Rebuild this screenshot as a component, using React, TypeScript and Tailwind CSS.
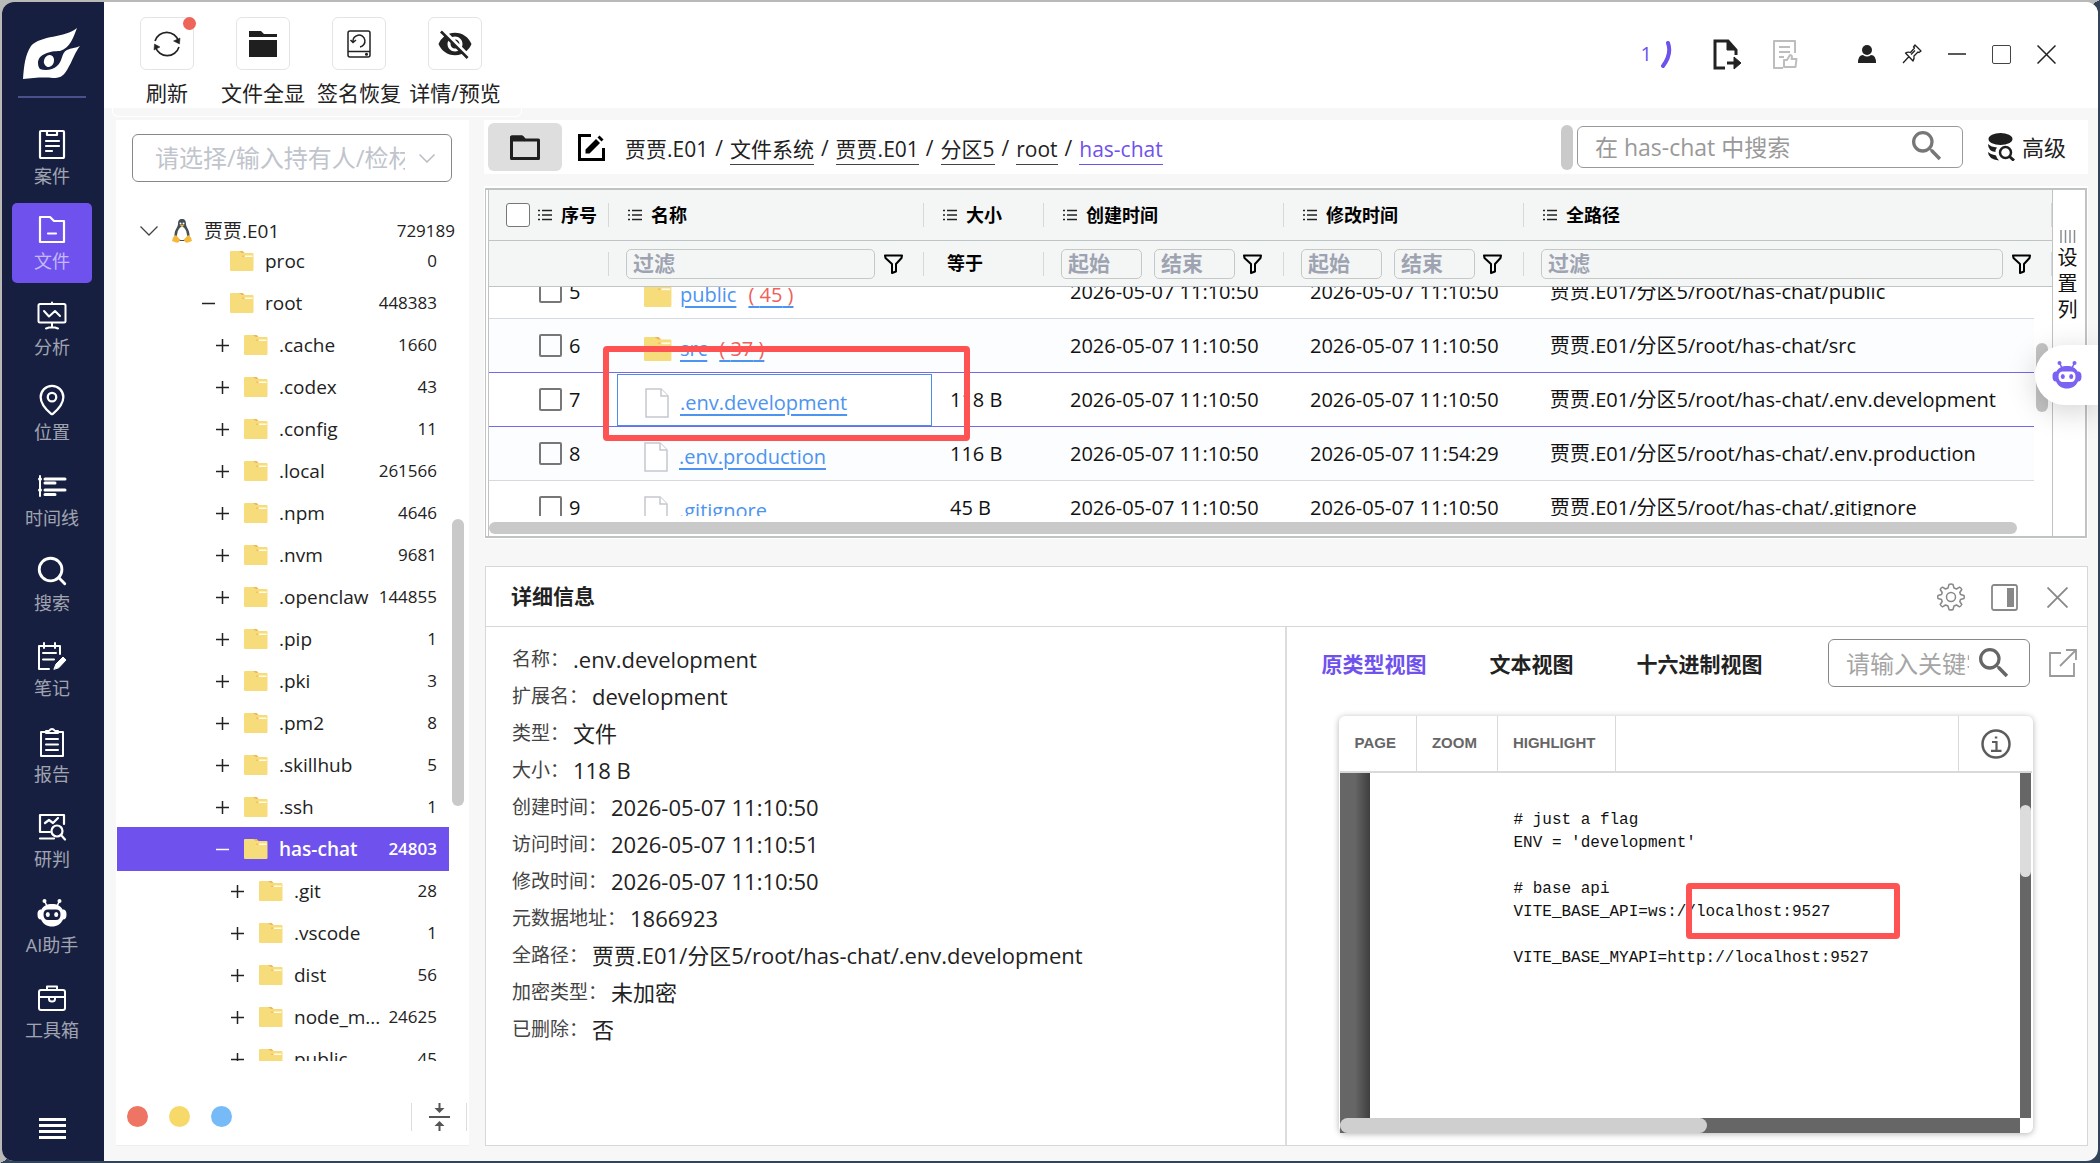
import React from "react";
import { MdVisibilityOff, MdSearch } from "react-icons/md";
import { Search, MapPin } from "lucide-react";

type TreeNode = {
  name: string;
  count: number;
  level: 0 | 1 | 2;
  state?: "open" | "closed";
  active?: boolean;
};

type FileRow = {
  no: number;
  name: string;
  kind: "folder" | "file";
  children?: number;
  size: string;
  created: string;
  modified: string;
  path: string;
};

const treeNodes: TreeNode[] = [
  { name: "proc", count: 0, level: 0 },
  { name: "root", count: 448383, level: 0, state: "open" },
  { name: ".cache", count: 1660, level: 1, state: "closed" },
  { name: ".codex", count: 43, level: 1, state: "closed" },
  { name: ".config", count: 11, level: 1, state: "closed" },
  { name: ".local", count: 261566, level: 1, state: "closed" },
  { name: ".npm", count: 4646, level: 1, state: "closed" },
  { name: ".nvm", count: 9681, level: 1, state: "closed" },
  { name: ".openclaw", count: 144855, level: 1, state: "closed" },
  { name: ".pip", count: 1, level: 1, state: "closed" },
  { name: ".pki", count: 3, level: 1, state: "closed" },
  { name: ".pm2", count: 8, level: 1, state: "closed" },
  { name: ".skillhub", count: 5, level: 1, state: "closed" },
  { name: ".ssh", count: 1, level: 1, state: "closed" },
  { name: "has-chat", count: 24803, level: 1, state: "open", active: true },
  { name: ".git", count: 28, level: 2, state: "closed" },
  { name: ".vscode", count: 1, level: 2, state: "closed" },
  { name: "dist", count: 56, level: 2, state: "closed" },
  { name: "node_m...", count: 24625, level: 2, state: "closed" },
  { name: "public", count: 45, level: 2, state: "closed" },
];

const levelPadding = ["pl-[85px]", "pl-[99px]", "pl-[114px]"];

const base = "贾贾.E01/分区5/root/has-chat/";
const time = "2026-05-07 11:10:50";

const rows: FileRow[] = [
  { no: 5, name: "public", kind: "folder", children: 45, size: "", created: time, modified: time, path: base + "public" },
  { no: 6, name: "src", kind: "folder", children: 37, size: "", created: time, modified: time, path: base + "src" },
  { no: 7, name: ".env.development", kind: "file", size: "118 B", created: time, modified: time, path: base + ".env.development" },
  { no: 8, name: ".env.production", kind: "file", size: "116 B", created: time, modified: "2026-05-07 11:54:29", path: base + ".env.production" },
  { no: 9, name: ".gitignore", kind: "file", size: "45 B", created: time, modified: time, path: base + ".gitignore" },
];

const details = [
  ["名称", ".env.development"],
  ["扩展名", "development"],
  ["类型", "文件"],
  ["大小", "118 B"],
  ["创建时间", "2026-05-07 11:10:50"],
  ["访问时间", "2026-05-07 11:10:51"],
  ["修改时间", "2026-05-07 11:10:50"],
  ["元数据地址", "1866923"],
  ["全路径", base + ".env.development"],
  ["加密类型", "未加密"],
  ["已删除", "否"],
];

const fileText = `# just a flag
ENV = 'development'

# base api
VITE_BASE_API=ws://localhost:9527

VITE_BASE_MYAPI=http://localhost:9527`;

/* ---------- icons ---------- */

const Line = ({ children, w = 2 }: { children: React.ReactNode; w?: number }) => (
  <svg width="30" height="30" viewBox="0 0 30 30" fill="none" stroke="currentColor" strokeWidth={w} strokeLinecap="round" strokeLinejoin="round">
    {children}
  </svg>
);

const Logo = () => (
  <svg width="58" height="52" viewBox="0 0 58 52" fill="#fff">
    <path d="M54 0C50 10 47 20 37 23C27 23 15 26 15 35C15 38 16 40 17 41C22 43 30 42 34 38C40 33 38 25 44 22C48 20 53 20 57 18C52 24 50 32 44 42C40 49 36 50 30 50C20 49 10 50 0 51C1 38 2 27 8 18C18 7 42 10 54 0Z" />
    <ellipse cx="26" cy="33" rx="5" ry="6" transform="rotate(20 26 33)" />
  </svg>
);

const Robot = ({ size = 30 }: { size?: number }) => (
  <svg width={size} height={size} viewBox="0 0 30 30">
    <circle cx="7.5" cy="3" r="2" fill="currentColor" />
    <circle cx="22.5" cy="3" r="2" fill="currentColor" />
    <path d="M7.5 3L10.5 9M22.5 3L19.5 9" stroke="currentColor" strokeWidth="1.6" />
    <path
      fill="currentColor"
      fillRule="evenodd"
      d="M15 6C20 6 24 8 25.500 11.500C28.500 11.500 29.500 13 29.500 16.500C29.500 20 28.500 21.500 26 21.500C24 26 20 28.500 15 28.500C10 28.500 6 26 4 21.500C1.500 21.500 .5 20 .5 16.500C.5 13 1.500 11.500 4.500 11.500C6 8 10 6 15 6ZM11 11.500C8 11.500 6.500 13 6.500 16.500C6.500 20 8 22 11 22H19C22 22 23.500 20 23.500 16.500C23.500 13 22 11.500 19 11.500Z"
    />
    <ellipse cx="10.800" cy="16.500" rx="2" ry="2.500" fill="currentColor" />
    <ellipse cx="19.200" cy="16.500" rx="2" ry="2.500" fill="currentColor" />
  </svg>
);

const FolderSolid = () => (
  <svg width="28" height="26" viewBox="0 0 28 26" fill="#1f1f1f">
    <path d="M0 0H12L15 3H28V6H0ZM0 9H28V26H0Z" />
  </svg>
);

const FolderIcon = ({ className = "w-6 h-5" }: { className?: string }) => (
  <svg className={className + " shrink-0"} viewBox="0 0 24 20" preserveAspectRatio="none">
    <path d="M1 0H12.500L14.500 2H22.500Q23.500 2 23.500 3V19Q23.500 20 22.500 20H1Q0 20 0 19V1Q0 0 1 0Z" fill="#f7dc7c" />
    <path d="M9 0H12.500L14.500 2H12Z" fill="#efb45c" />
    <rect x="15" y="4.500" width="7.500" height="1.500" fill="#fffbe8" />
    <rect x="12" y="4.500" width="2" height="1.500" fill="#f3c064" />
  </svg>
);

const FileIcon = () => (
  <svg className="w-6 h-[30px] shrink-0" viewBox="0 0 24 30" fill="#fff" stroke="#c3c7cd" strokeWidth="1.500">
    <path d="M1 1H16L23 8V29H1Z" />
    <path d="M16 1V8H23" />
  </svg>
);

const ListIcon = () => (
  <svg className="shrink-0" width="14" height="12" viewBox="0 0 14 12" stroke="#222" strokeWidth="1.600">
    <path d="M0 1.500H2M4 1.500H14M0 6H2M4 6H14M0 10.500H2M4 10.500H14" />
  </svg>
);

const Funnel = () => (
  <button aria-label="筛选" className="shrink-0 text-black">
    <svg width="19" height="20" viewBox="0 0 19 20" fill="none" stroke="currentColor" strokeWidth="2" strokeLinejoin="round">
      <path d="M1 1.500H18L17.500 4L12 10V17.500L8 19V10L1.500 4Z" />
    </svg>
  </button>
);

const Penguin = () => (
  <svg width="20" height="24" viewBox="0 0 20 24">
    <path d="M10 0C13 0 14 2 14 5C14 8 17.500 11 17.500 16C17.500 20 15 22 10 22C5 22 2.500 20 2.500 16C2.500 11 6 8 6 5C6 2 7 0 10 0Z" fill="#454d55" />
    <path d="M10 7.500C13 8 15 13 15 17C15 20 13 21 10 21C7 21 5 20 5 17C5 13 7 8 10 7.500Z" fill="#fff" />
    <circle cx="8.500" cy="4.500" r="1" fill="#fff" />
    <circle cx="11.500" cy="4.500" r="1" fill="#fff" />
    <path d="M8 6.500L10 5.500L12 6.500L10 8.200Z" fill="#f5b83d" />
    <path d="M4 16L8 20.500C8 23 6 24 4 23.500L0 22L1 18.500ZM16 16L12 20.500C12 23 14 24 16 23.500L20 22L19 18.500Z" fill="#f5b83d" />
  </svg>
);

const navItems: { label: string; icon: React.ReactNode; active?: boolean }[] = [
  {
    label: "案件",
    icon: (
      <Line w={2.2}>
        <path d="M9 2H4Q3 2 3 3V28Q3 29 4 29H26Q27 29 27 28V3Q27 2 26 2H21M10 2H20V6H10ZM9 12H22M9 17H22M9 22H15" />
      </Line>
    ),
  },
  {
    label: "文件",
    active: true,
    icon: (
      <Line w={2.2}>
        <path d="M3 3H13L17 7H27V28H3ZM11 19.500H19" />
      </Line>
    ),
  },
  {
    label: "分析",
    icon: (
      <Line>
        <path d="M3 4H27Q28.500 4 28.500 5.500V21Q28.500 22.500 27 22.500H3Q1.500 22.500 1.500 21V5.500Q1.500 4 3 4ZM15 2.500V4M7 11L12 16.500L18 11L23 16M15 23V27M9 28.500L12 27.500H18L21 28.500" />
      </Line>
    ),
  },
  { label: "位置", icon: <MapPin size={34} strokeWidth={1.6} /> },
  {
    label: "时间线",
    icon: (
      <Line w={3}>
        <path d="M3 5V25" strokeWidth="2" />
        <path d="M2.500 8H3.500M2.500 19H3.500M8 8H28M8 12H18M8 19H28M8 23.500H18" />
      </Line>
    ),
  },
  { label: "搜索", icon: <Search size={34} strokeWidth={2} /> },
  {
    label: "笔记",
    icon: (
      <Line>
        <path d="M12 28H2V5H23V13M7 2V7M18 2V7M13 5H14M6 12H19M6 18.500H17" />
        <path d="M17 28L19 23L26 16L29 19L22 26.500Z" fill="currentColor" strokeWidth="1" />
      </Line>
    ),
  },
  {
    label: "报告",
    icon: (
      <Line>
        <path d="M8 5H4V29H26V5H22M9 6H21V4H18Q15 0 12 4H9ZM9 12H21M9 17.500H21M9 23H21" />
      </Line>
    ),
  },
  {
    label: "研判",
    icon: (
      <Line w={2.2}>
        <path d="M13 20H3V3H27V12M8 11L12 8L16 11L21 6M3 26.500H17" />
        <circle cx="20" cy="19" r="5.500" />
        <path d="M24 23L28 27.500" />
      </Line>
    ),
  },
  { label: "AI助手", icon: <Robot /> },
  {
    label: "工具箱",
    icon: (
      <Line>
        <path d="M4 7H26Q28 7 28 9V25Q28 27 26 27H4Q2 27 2 25V9Q2 7 4 7ZM10 7V3.500H20V7M2 14H28M12 14V16Q12 18.500 15 18.500Q18 18.500 18 16V14" />
      </Line>
    ),
  },
];

/* ---------- sidebar ---------- */

const Sidebar = () => (
  <aside className="w-[102px] pr-[2px] shrink-0 flex flex-col items-center bg-[#171f40] text-white">
    <div className="mt-[26px] mb-4">
      <Logo />
    </div>
    <hr className="w-[68px] border-0 h-[2px] bg-[#4b4f8c]" />
    <nav className="flex-1 mt-5 flex flex-col justify-between">
      {navItems.map((item) => (
        <button
          key={item.label}
          className={`w-20 h-20 rounded-[5px] flex flex-col items-center justify-center gap-1 ${item.active ? "bg-[#6f51ee]" : ""}`}
        >
          <span className="h-8 flex items-center">{item.icon}</span>
          <span className="text-[18px] leading-6 text-white/60">{item.label}</span>
        </button>
      ))}
    </nav>
    <button aria-label="菜单" className="mt-[66px] mb-[22px]">
      <svg width="27" height="21" viewBox="0 0 27 21" stroke="#fff" strokeWidth="3">
        <path d="M0 1.500H27M0 7.500H27M0 13.500H27M0 19.500H27" />
      </svg>
    </button>
  </aside>
);

/* ---------- top bar ---------- */

const tools = [
  {
    label: "刷新",
    badge: true,
    icon: (
      <svg width="28" height="28" viewBox="0 0 28 28" fill="none" stroke="#222" strokeWidth="1.600">
        <path d="M2 11A12.300 12.300 0 0 1 25.500 11M26 17A12.300 12.300 0 0 1 2.500 17" />
        <path d="M27 8L26.500 14L20.500 11ZM1 20L1.500 14L7 17Z" fill="#222" strokeWidth=".5" />
      </svg>
    ),
  },
  { label: "文件全显", icon: <FolderSolid /> },
  {
    label: "签名恢复",
    icon: (
      <svg width="24" height="28" viewBox="0 0 24 28" fill="none" stroke="#222" strokeWidth="1.500">
        <rect x="1" y="1" width="22" height="26" rx="2" />
        <path d="M1 21.500H23M6 12A6 6 0 1 1 13 17M3.500 10L6 12.500L9 10" />
        <circle cx="19.500" cy="24.300" r=".8" fill="#222" />
      </svg>
    ),
  },
  { label: "详情/预览", icon: <MdVisibilityOff size={36} /> },
];

const TopBar = () => (
  <header className="h-[106px] shrink-0 bg-white flex justify-between pl-[15px]">
    <div className="flex pt-[15px]">
      {tools.map((tool) => (
        <button key={tool.label} className="w-24 flex flex-col items-center text-[#222]">
          <span className="relative size-[54px] border border-[#e4e4e4] rounded-md flex items-center justify-center">
            {tool.icon}
            {tool.badge && <i className="absolute -top-px -right-[3px] size-[13px] rounded-full bg-[#ee6459]" />}
          </span>
          <span className="mt-2 text-[21px] leading-[30px] whitespace-nowrap">{tool.label}</span>
        </button>
      ))}
    </div>
    <div className="flex items-center h-[104px] pr-[42px] text-[#222]">
      <span className="text-[20px] text-[#6f51ee] mr-2">1</span>
      <svg className="mr-10" width="13" height="28" viewBox="0 0 13 28" fill="none" stroke="#6f51ee" strokeWidth="4" strokeLinecap="round">
        <path d="M8 3Q12 14 3 26" />
      </svg>
      <button aria-label="导出" className="mr-[31px]">
        <svg width="29" height="31" viewBox="0 0 29 31" fill="none" stroke="currentColor" strokeWidth="3">
          <path d="M12 29H2V2H15L23 11V16" />
          <path d="M14 2V11H23Z" fill="currentColor" strokeWidth="1" />
          <path d="M14 24H22" />
          <path d="M21 18L28 24L21 30Z" fill="currentColor" strokeWidth="1" />
        </svg>
      </button>
      <button aria-label="审核" className="mr-[60px] text-[#bdbdbd]">
        <svg width="25" height="29" viewBox="0 0 25 29" fill="none" stroke="currentColor" strokeWidth="2" strokeLinejoin="round">
          <path d="M10 28H1V1H22V13M6 7H17M6 12H17M6 17H11" />
          <path d="M11 20H14L17 15Q20 15 18.500 19H23.500L22.500 27H11Z" />
        </svg>
      </button>
      <button aria-label="用户" className="mr-[26px]">
        <svg width="18" height="18" viewBox="0 0 18 18" fill="currentColor">
          <circle cx="9" cy="5" r="5" />
          <path d="M0 18Q0 10 5 10Q9 13 13 10Q18 10 18 18Z" />
        </svg>
      </button>
      <button aria-label="置顶" className="mr-[26px]">
        <svg width="20" height="20" viewBox="0 0 20 20" fill="none" stroke="currentColor" strokeWidth="1.300" strokeLinejoin="round">
          <path d="M13 1L19 7L17 8.500L16 8L12 12Q12.500 15 11 17L3.500 9Q6 7.500 8.500 8.500L12.500 4L11.500 3ZM7 12.500L1 19M9 10.500L13 6.500" />
        </svg>
      </button>
      <button aria-label="最小化" className="mr-[26px]">
        <svg width="18" height="20" viewBox="0 0 18 20" stroke="currentColor" strokeWidth="1.500">
          <path d="M0 10H18" />
        </svg>
      </button>
      <button aria-label="最大化" className="mr-[26px] size-[19px] border border-[#444] rounded-[2px]" />
      <button aria-label="关闭">
        <svg width="19" height="19" viewBox="0 0 19 19" stroke="currentColor" strokeWidth="1.500">
          <path d="M.5 .5L18.500 18.500M18.500 .5L.5 18.500" />
        </svg>
      </button>
    </div>
  </header>
);

/* ---------- file tree ---------- */

const TreeItem = ({ node }: { node: TreeNode }) => (
  <li
    className={`flex items-center pr-3 mr-5 ${levelPadding[node.level]} ${
      node.active ? "h-11 -my-px bg-[#6f51ee] text-white font-semibold" : "h-[42px] text-[#222]"
    }`}
  >
    <button aria-label={node.state === "open" ? "收起" : "展开"} className="w-[13px] mr-[15px] shrink-0">
      {node.state && (
        <svg width="13" height="13" viewBox="0 0 13 13" stroke="currentColor" strokeWidth="1.500">
          <path d={node.state === "open" ? "M0 6.500H13" : "M0 6.500H13M6.500 0V13"} />
        </svg>
      )}
    </button>
    <FolderIcon />
    <span className="ml-[11px] text-[19px] leading-7 flex-1 whitespace-nowrap">{node.name}</span>
    <span className="text-[17px]">{node.count}</span>
  </li>
);

const TreePanel = () => (
  <section className="w-[353px] shrink-0 bg-white flex flex-col">
    <div className="relative mx-4 mt-[14px]">
      <select
        aria-label="持有人/检材"
        className="w-80 h-12 appearance-none rounded-md border border-[#888] bg-transparent pl-[22px] pr-[46px] text-[24px] text-[#c0c4cc]"
      >
        <option>请选择/输入持有人/检材</option>
      </select>
      <svg className="absolute right-[18px] top-5 pointer-events-none" width="16" height="9" viewBox="0 0 16 9" fill="none" stroke="#b8bcc4" strokeWidth="1.500">
        <path d="M.5 .5L8 8L15.500 .5" />
      </svg>
    </div>
    <div className="relative flex-1 min-h-0 mt-7 overflow-hidden pl-px">
      <div className="flex items-center h-[30px] pt-3 pl-[23px] pr-[14px] text-[#222]">
        <svg width="18" height="10" viewBox="0 0 18 10" fill="none" stroke="#444" strokeWidth="1.300">
          <path d="M.5 .5L9 9L17.500 .5" />
        </svg>
        <span className="ml-[14px]">
          <Penguin />
        </span>
        <span className="ml-3 text-[19px] flex-1">贾贾.E01</span>
        <span className="text-[17px]">729189</span>
      </div>
      <ul>
        {treeNodes.map((node) => (
          <TreeItem key={node.name} node={node} />
        ))}
      </ul>
      <span className="absolute right-[5px] top-[309px] w-3 h-[287px] rounded-full bg-[#c9c9c9]" />
    </div>
    <div className="mt-[42px] h-[43px] shrink-0 border-b border-[#eee] flex items-start">
      <div className="flex flex-1 gap-[21px] pl-[11px] pt-[3px]">
        <button aria-label="红色标记" className="size-[21px] rounded-full bg-[#ee7564]" />
        <button aria-label="黄色标记" className="size-[21px] rounded-full bg-[#f7d96a]" />
        <button aria-label="蓝色标记" className="size-[21px] rounded-full bg-[#76bbf7]" />
      </div>
      <button aria-label="全部折叠" className="h-7 w-14 mr-[2px] border-x border-[#ddd] flex items-center justify-center text-[#555]">
        <svg width="21" height="28" viewBox="0 0 21 28" fill="currentColor">
          <path d="M0 13H21V15H0ZM9.500 0H11.500V5H15.500L10.500 10L5.500 5H9.500ZM9.500 28H11.500V23H15.500L10.500 18L5.500 23H9.500Z" />
        </svg>
      </button>
    </div>
  </section>
);

/* ---------- breadcrumb bar ---------- */

const crumbs = ["贾贾.E01", "文件系统", "贾贾.E01", "分区5", "root", "has-chat"];

const PathBar = () => (
  <div className="h-[54px] shrink-0 bg-white flex items-center px-1">
    <button aria-label="文件夹" className="w-[74px] h-12 rounded-md bg-[#dedede] flex items-center justify-center">
      <svg width="30" height="25" viewBox="0 0 30 25" fill="none" stroke="#1f1f1f" strokeWidth="3" strokeLinejoin="round">
        <path d="M1.500 2H12L15 5H28.500V23.500H1.500Z" />
        <path d="M2 2H12L14 5H2Z" fill="#1f1f1f" />
      </svg>
    </button>
    <button aria-label="编辑路径" className="ml-4 mr-5">
      <svg width="27" height="27" viewBox="0 0 27 27" fill="none" stroke="#000" strokeWidth="3">
        <path d="M13 1.500H1.500V25.500H25.500V14" />
        <path d="M7.500 19.500V15.500L18 5L22 9L11.500 19.500ZM19.500 3.500L21.500 1.500L25.500 5.500L23.500 7.500Z" fill="#000" stroke="none" />
      </svg>
    </button>
    <nav className="flex items-center pt-1 text-[21px] text-[#222]">
      {crumbs.map((crumb, i) => (
        <React.Fragment key={i}>
          {i > 0 && <span className="mx-[7px]">/</span>}
          <a
            href="#"
            className={`leading-[30px] border-b ${
              i === 0 ? "border-transparent" : i === crumbs.length - 1 ? "border-[#6f51ee] text-[#6f51ee]" : "border-[#444]"
            }`}
          >
            {crumb}
          </a>
        </React.Fragment>
      ))}
    </nav>
    <span className="ml-auto w-3 h-[45px] rounded-full bg-[#cacaca]" />
    <div className="relative ml-1">
      <input
        aria-label="搜索"
        placeholder="在 has-chat 中搜索"
        className="w-[386px] h-[42px] rounded-md border border-[#999] pl-[17px] pr-16 text-[23px] placeholder:text-[#999]"
      />
      <MdSearch className="absolute right-4 top-0 text-[#777]" size={40} />
    </div>
    <button className="ml-[25px] mr-[18px] flex items-center gap-[7px] text-[22px] text-[#222]">
      <svg width="27" height="28" viewBox="0 0 27 28" fill="#1f1f1f">
        <ellipse cx="12.500" cy="6" rx="12" ry="6" />
        <path d="M0 11Q3 14 9 14.500Q7 17 7.500 19Q0 18 0 11ZM0 19Q3 22 8 22.500Q8.500 25 11 27.500Q0 26 0 19Z" />
        <circle cx="17.500" cy="19.500" r="5.500" fill="none" stroke="#1f1f1f" strokeWidth="2.500" />
        <path d="M21.500 23.500L26 27.500" stroke="#1f1f1f" strokeWidth="3" />
      </svg>
      高级
    </button>
  </div>
);

/* ---------- file table ---------- */

const HeadCell = ({ label, check }: { label: string; check?: boolean }) => (
  <th scope="col" className="p-0 font-bold border-b border-[#bfc4c7]">
    <div className={`h-6 flex items-center border-r border-[#d5d9dc] ${check ? "pl-[17px]" : "pl-[19px]"}`}>
      {check && <input type="checkbox" aria-label="全选" className="appearance-none size-6 mr-2 bg-white border border-[#777] rounded-[3px]" />}
      <ListIcon />
      <span className="ml-[9px] text-[18px] text-black">{label}</span>
    </div>
  </th>
);

const filterInput =
  "h-[30px] rounded-[5px] border border-[#c5c8c9] bg-transparent px-[6px] text-[21px] font-bold placeholder:font-bold placeholder:text-[#9ea3b2] min-w-0";

const FilterCell = ({ children }: { children?: React.ReactNode }) => (
  <td className="p-0 border-b border-[#bfc4c7]">
    <div className="h-6 flex items-center border-r border-[#d5d9dc] pl-[17px] pr-5">{children}</div>
  </td>
);

const DateFilter = ({ label }: { label: string }) => (
  <FilterCell>
    <input aria-label={label + "起始"} placeholder="起始" className={filterInput + " w-[81px]"} />
    <input aria-label={label + "结束"} placeholder="结束" className={filterInput + " w-[81px] ml-3 mr-2"} />
    <Funnel />
  </FilterCell>
);

const Columns = ({ first }: { first: string }) => (
  <colgroup>
    <col className={first} />
    <col className="w-[315px]" />
    <col className="w-[120px]" />
    <col className="w-[240px]" />
    <col className="w-[240px]" />
    <col />
  </colgroup>
);

const FileTable = () => (
  <section className="relative h-[353px] shrink-0 bg-white p-px pt-[2px]">
    <div className="h-full border-2 border-[#c0c3c4] border-l border-b-2 pl-[2px] flex">
      <div className="relative flex-1 min-w-0 flex flex-col border-l border-[#c0c3c4]">
        <table className="w-full table-fixed border-separate border-spacing-0 bg-[#f4f6f5] text-left">
          <Columns first="w-[120px]" />
          <thead>
            <tr className="h-[51px]">
              <HeadCell label="序号" check />
              <HeadCell label="名称" />
              <HeadCell label="大小" />
              <HeadCell label="创建时间" />
              <HeadCell label="修改时间" />
              <HeadCell label="全路径" />
            </tr>
          </thead>
          <tbody>
            <tr className="h-[46px]">
              <FilterCell />
              <FilterCell>
                <input aria-label="名称过滤" placeholder="过滤" className={filterInput + " flex-1 mr-[9px]"} />
                <Funnel />
              </FilterCell>
              <FilterCell>
                <span className="pl-[6px] text-[18px] font-bold">等于</span>
              </FilterCell>
              <DateFilter label="创建时间" />
              <DateFilter label="修改时间" />
              <FilterCell>
                <input aria-label="全路径过滤" placeholder="过滤" className={filterInput + " flex-1 mr-[9px]"} />
                <Funnel />
              </FilterCell>
            </tr>
          </tbody>
        </table>

        <div className="h-[229px] overflow-hidden pr-[18px]">
          <table className="-mt-[22px] w-full table-fixed border-separate border-spacing-0 text-[20px] text-[#111]">
            <Columns first="w-[128px]" />
            <tbody>
              {rows.map((row) => {
                const selected = row.no === 7;
                const line = selected || row.no === 6 ? "border-[#7468ee]" : "border-[#d6d9dd]";
                const cell = "p-0 border-b " + line;
                return (
                  <tr key={row.no} className={`h-[54px] ${row.no % 2 ? "bg-white" : "bg-[#fcfdff]"}`}>
                    <td className={cell}>
                      <label className="flex items-center pl-[50px] gap-[7px]">
                        <input type="checkbox" className="appearance-none size-[23px] border-2 border-[#777] rounded-[2px]" />
                        {row.no}
                      </label>
                    </td>
                    <td className={cell}>
                      <div className={`h-[52px] flex items-center pl-[27px] pt-[6px] ${selected ? "border border-[#4d8de8]" : ""}`}>
                        {row.kind === "folder" ? <FolderIcon className="w-7 h-6" /> : <FileIcon />}
                        <a href="#" className={`text-[#4d94f0] underline underline-offset-4 decoration-2 ${row.kind === "folder" ? "ml-2" : "ml-[11px]"}`}>
                          {row.name}
                        </a>
                        {row.children && (
                          <a href="#" className="ml-3 text-[#f0605a] underline underline-offset-4 decoration-2 decoration-[#4d94f0]">
                            ( {row.children} )
                          </a>
                        )}
                      </div>
                    </td>
                    <td className={cell + " pl-[18px]"}>{row.size}</td>
                    <td className={cell + " pl-[18px]"}>{row.created}</td>
                    <td className={cell + " pl-[18px]"}>{row.modified}</td>
                    <td className={cell + " pl-[18px] whitespace-nowrap"}>{row.path}</td>
                  </tr>
                );
              })}
            </tbody>
          </table>
        </div>
        <div className="mt-[6px] mr-[35px] h-3 rounded-full bg-[#c9c9c9]" />
        <span className="absolute right-1 top-[153px] w-3 h-[69px] rounded-full bg-[#c4c4c4]" />
        {/* red marker over the selected file */}
        <div className="absolute left-[114px] top-[156px] w-[367px] h-[95px] border-6 border-[#ff5252] rounded-[4px]" />
      </div>
      <button className="w-[33px] shrink-0 border-l border-[#c0c3c4] flex flex-col items-center pt-10 pr-[3px] text-[20px] leading-[26px] text-[#111]">
        <svg width="16" height="13" viewBox="0 0 16 13" stroke="#8a8f93" strokeWidth="1.500" className="mb-[2px]">
          <path d="M1 0V13M5.500 0V13M10 0V13M14.500 0V13" />
        </svg>
        <span>设</span>
        <span>置</span>
        <span>列</span>
      </button>
    </div>
    <button
      aria-label="AI助手"
      className="absolute -right-[10px] top-[159px] w-[63px] h-[60px] rounded-l-full bg-white shadow-[0_6px_30px_rgba(0,0,0,0.18)] pl-[17px] text-[#7c62f2]"
    >
      <Robot />
    </button>
  </section>
);

/* ---------- details ---------- */

const Viewer = () => (
  <div className="mt-[29px] ml-[52px] mr-[54px] mb-3 flex-1 min-h-0 flex flex-col rounded-md bg-white shadow-[0_1px_6px_rgba(0,0,0,0.3)] px-px">
    <div className="h-[57px] shrink-0 flex border-b-2 border-[#d9d9d9] text-[15px] font-bold text-[#666] font-['Liberation_Sans',sans-serif]">
      {["PAGE", "ZOOM", "HIGHLIGHT"].map((item) => (
        <button key={item} className="pl-[15px] pr-5 border-r border-[#d9d9d9]">
          {item}
        </button>
      ))}
      <button aria-label="信息" className="ml-auto w-[74px] border-l border-[#d9d9d9] flex items-center justify-center">
        <svg width="30" height="30" viewBox="0 0 30 30" fill="none" stroke="#5c5c5c" strokeWidth="2.500">
          <circle cx="15" cy="15" r="13.500" />
          <path d="M11 13H15.500V21.500M10 21.800H20.500M13.800 8.500H16.300" strokeWidth="2.200" />
        </svg>
      </button>
    </div>
    <div className="flex-1 min-h-0 flex mr-px">
      <div className="w-[30px] shrink-0 bg-linear-to-r from-[#666] from-50% to-[#3f3f3f]" />
      <div className="relative flex-1 pt-9 pl-36">
        <pre className="text-[16px] leading-[23px] text-[#111] font-['Liberation_Mono',monospace]">{fileText}</pre>
        {/* red marker over the host and port */}
        <div className="absolute left-[316px] top-[110px] w-[214px] h-14 border-6 border-[#ff5252] rounded-[4px]" />
      </div>
      <div className="w-[11px] shrink-0 bg-[#666] pt-8">
        <div className="h-[72px] rounded-full bg-[#dcdcdc]" />
      </div>
    </div>
    <div className="h-[15px] shrink-0 mr-3 bg-[#666]">
      <div className="w-[54%] h-[15px] rounded-full bg-[#cfcfcf]" />
    </div>
  </div>
);

const DetailPanel = () => (
  <section className="mt-[27px] ml-px flex-1 min-h-0 border border-[#d5d7d9] bg-white flex flex-col">
    <div className="h-[60px] shrink-0 border-b border-[#d5d7d9] flex items-center pl-[25px] pr-[19px] pt-px text-[#888]">
      <h2 className="flex-1 text-[21px] font-bold text-[#222]">详细信息</h2>
      <button aria-label="设置">
        <svg width="28" height="28" viewBox="0 0 28 28" fill="none" stroke="currentColor" strokeWidth="1.500" strokeLinejoin="round">
          <path d="M12 1.500Q14 .5 16 1.500L17 5L19.500 6L22.500 4.200Q24 5 24.800 6.500L22.800 9.500L23.500 11.500L27 12.500Q27.500 14 27 15.500L23.500 16.500L22.800 18.500L24.800 21.500Q24 23 22.500 23.800L19.500 22L17 23L16 26.500Q14 27.500 12 26.500L11 23L8.500 22L5.500 23.800Q4 23 3.200 21.500L5.200 18.500L4.500 16.500L1 15.500Q.5 14 1 12.500L4.500 11.500L5.200 9.500L3.200 6.500Q4 5 5.500 4.200L8.500 6L11 5Z" />
          <circle cx="14" cy="14" r="4.500" />
        </svg>
      </button>
      <button aria-label="布局" className="ml-[26px]">
        <svg width="27" height="27" viewBox="0 0 27 27" fill="none" stroke="currentColor" strokeWidth="1.800">
          <rect x="1" y="1" width="25" height="25" rx="2" />
          <path d="M16 4H23V23H16Z" fill="currentColor" stroke="none" />
        </svg>
      </button>
      <button aria-label="关闭详情" className="ml-[29px]">
        <svg width="21" height="21" viewBox="0 0 21 21" stroke="currentColor" strokeWidth="1.800">
          <path d="M.5 .5L20.500 20.500M20.500 .5L.5 20.500" />
        </svg>
      </button>
    </div>
    <div className="flex-1 min-h-0 flex">
      <dl className="w-1/2 pt-[14px] pl-[26px] border-r-2 border-[#ddd] text-[#222]">
        {details.map(([label, value]) => (
          <div key={label} className="h-[37px] flex items-center gap-1 whitespace-nowrap">
            <dt className="text-[19px] text-[#444]">{label}：</dt>
            <dd className="text-[22px]">{value}</dd>
          </div>
        ))}
      </dl>
      <div className="w-1/2 flex flex-col">
        <div className="flex items-center pt-3 pl-[35px] pr-[10px]">
          <div className="flex gap-[63px] text-[21px] font-bold text-[#222] pt-1">
            <button className="text-[#6f51ee]">原类型视图</button>
            <button>文本视图</button>
            <button>十六进制视图</button>
          </div>
          <div className="relative ml-auto">
            <input
              aria-label="关键字"
              placeholder="请输入关键字"
              className="w-[202px] h-12 rounded-md border border-[#888] pl-[17px] pr-[60px] text-[24px] placeholder:text-[#a5a5a5]"
            />
            <MdSearch className="absolute right-4 top-1 text-[#666]" size={40} />
          </div>
          <button aria-label="新窗口打开" className="ml-[19px] text-[#999]">
            <svg width="28" height="28" viewBox="0 0 28 28" fill="none" stroke="currentColor" strokeWidth="1.800">
              <path d="M12 4H1V27H25V14M17 1H27V11M27 1L11 17" />
            </svg>
          </button>
        </div>
        <Viewer />
      </div>
    </div>
  </section>
);

const App = () => {
  return (
    <div className="h-screen p-[2px] bg-linear-to-br from-[#b9b9b7] from-50% to-[#33445a] to-50% font-['Open_Sans','Noto_Sans_CJK_SC',sans-serif]">
      <div className="h-full flex rounded-xl overflow-hidden bg-[#f7f7f7]">
        <Sidebar />
        <main className="flex-1 min-w-0 flex flex-col">
          <TopBar />
          <div className="w-[410px] ml-2 h-[9px] mb-[3px] shrink-0 border border-t-0 border-white rounded-b-md" />
          <div className="flex-1 min-h-0 flex gap-[15px] pl-3 pr-[10px] pb-[15px]">
            <TreePanel />
            <div className="flex-1 min-w-0 flex flex-col">
              <PathBar />
              <div className="h-3 shrink-0" />
              <FileTable />
              <DetailPanel />
            </div>
          </div>
        </main>
      </div>
    </div>
  );
};

export default App;
